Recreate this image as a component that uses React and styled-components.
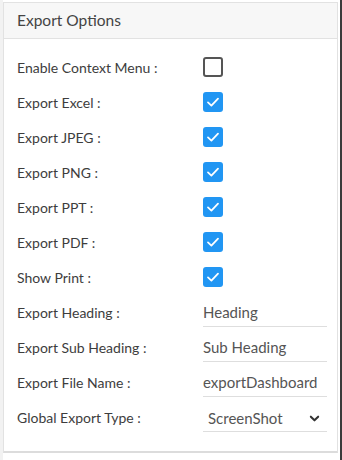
import React from "react";
import styled, { createGlobalStyle } from "styled-components";

const Global = createGlobalStyle`
  html, body { margin: 0; padding: 0; background: #ffffff; }
  body { font-family: "Lato", "Noto Sans", sans-serif; }
`;

const Page = styled.div`
  width: 342px;
  height: 460px;
  display: flex;
  background: #ffffff;
  overflow: hidden;
`;

const LeftStrip = styled.div`
  width: 3px;
  background: #f2f2f2;
  flex: none;
`;

const Main = styled.div`
  flex: 1;
  display: flex;
  flex-direction: column;
  padding-top: 2px;
`;

const RightBar = styled.div`
  width: 2px;
  margin-left: 2px;
  background: #3a3a3a;
  flex: none;
`;

const Panel = styled.section`
  border: 1px solid #e2e2e2;
  border-bottom: 2px solid #dcdcdc;
  display: flex;
  flex-direction: column;
`;

const Header = styled.div`
  height: 36px;
  background: #f7f7f7;
  border-bottom: 1px solid #e2e2e2;
  display: flex;
  align-items: center;
  padding-left: 13px;
  padding-bottom: 1px;
  box-sizing: border-box;
  font-size: 15.5px;
  color: #444;
`;

const Body = styled.div`
  padding: 10px 10px 17px 13px;
  display: flex;
  flex-direction: column;
`;

const Row = styled.div`
  height: 35px;
  display: grid;
  grid-template-columns: 186px 124px;
  align-items: ${(p) => (p.$field ? "end" : "center")};
`;

const Label = styled.div`
  font-size: 14px;
  color: #3d3d3d;
  align-self: center;
  padding-top: 1px;
  white-space: nowrap;
`;

const Box = styled.span`
  width: 20px;
  height: 20px;
  box-sizing: border-box;
  border-radius: 3px;
  display: flex;
  align-items: center;
  justify-content: center;
  background: ${(p) => (p.$on ? "#2196f3" : "#ffffff")};
  border: ${(p) => (p.$on ? "none" : "2px solid #555")};
`;

const Field = styled.div`
  height: 30px;
  box-sizing: border-box;
  padding-top: ${(p) => (p.$select ? "3px" : "1px")};
  margin-bottom: 2px;
  border-bottom: 1px solid #dedede;
  display: flex;
  align-items: center;
  justify-content: space-between;
  font-size: 15px;
  color: #555;
  padding-left: ${(p) => (p.$select ? "5px" : "0")};
  padding-right: ${(p) => (p.$select ? "7px" : "0")};
  white-space: nowrap;
  overflow: hidden;
`;

const Check = ({ on }) => (
  <Box $on={on}>
    {on && (
      <svg width="14" height="14" viewBox="0 0 14 14">
        <path d="M2 7.4 L5.4 10.6 L12 3.6" fill="none" stroke="#fff" strokeWidth="1.8" strokeLinecap="round" strokeLinejoin="round" />
      </svg>
    )}
  </Box>
);

const Chevron = () => (
  <svg width="11" height="11" viewBox="0 0 12 12">
    <path d="M2 4 L6 8 L10 4" fill="none" stroke="#333" strokeWidth="2.2" strokeLinecap="round" strokeLinejoin="round" />
  </svg>
);

const checks = [
  ["Enable Context Menu :", false],
  ["Export Excel :", true],
  ["Export JPEG :", true],
  ["Export PNG :", true],
  ["Export PPT :", true],
  ["Export PDF :", true],
  ["Show Print :", true],
];

const fields = [
  ["Export Heading :", "Heading"],
  ["Export Sub Heading :", "Sub Heading"],
  ["Export File Name :", "exportDashboard"],
];

export default function App() {
  return (
    <Page>
      <Global />
      <LeftStrip />
      <Main>
        <Panel>
          <Header>Export Options</Header>
          <Body>
            {checks.map(([l, on]) => (
              <Row key={l}>
                <Label>{l}</Label>
                <Check on={on} />
              </Row>
            ))}
            {fields.map(([l, v]) => (
              <Row key={l} $field>
                <Label>{l}</Label>
                <Field>{v}</Field>
              </Row>
            ))}
            <Row $field>
              <Label>Global Export Type :</Label>
              <Field $select>
                <span>ScreenShot</span>
                <Chevron />
              </Field>
            </Row>
          </Body>
        </Panel>
      </Main>
      <RightBar />
    </Page>
  );
}
